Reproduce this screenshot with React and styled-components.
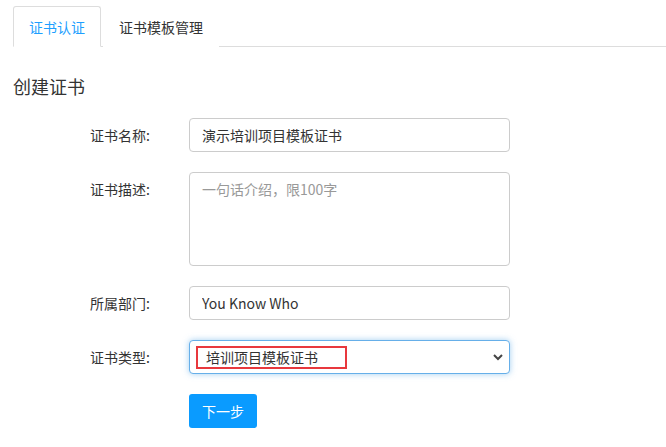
import React from 'react';
import styled, { createGlobalStyle } from 'styled-components';

const GlobalStyle = createGlobalStyle`
body {
  margin: 0;
  background: #fff;
  font-family: "Noto Sans CJK SC", "Liberation Sans", sans-serif;
  color: #333;
}
`;

const Page = styled.div`
  width: 666px;
  height: 447px;
  overflow: hidden;
  padding-top: 5px;
  box-sizing: border-box;
`;

const TabBar = styled.div`
  display: flex;
  align-items: flex-end;
  margin-left: 13px;
  height: 41px;
  border-bottom: 1px solid #ddd;
`;

const Tab = styled.div`
  height: 41px;
  box-sizing: border-box;
  padding: 0 15px;
  margin-right: 2px;
  margin-bottom: -1px;
  display: flex;
  align-items: center;
  font-size: 14px;
  cursor: pointer;
  border: 1px solid ${(p) => (p.active ? '#ddd' : 'transparent')};
  border-bottom-color: ${(p) => (p.active ? '#fff' : 'transparent')};
  border-radius: 3px 3px 0 0;
  background: #fff;
  color: ${(p) => (p.active ? '#1e9fff' : '#333')};
`;

const Heading = styled.h2`
  margin: 27px 0 0 13px;
  font-size: 18px;
  line-height: 24px;
  font-weight: normal;
  color: #333;
`;

const Form = styled.form`
  display: grid;
  grid-template-columns: 150px 321px;
  column-gap: 39px;
  row-gap: 20px;
  margin-top: 20px;
`;

const Label = styled.label`
  text-align: right;
  font-size: 14px;
  line-height: 34px;
  align-self: start;
  color: #333;
`;

const fieldBase = `
  box-sizing: border-box;
  width: 321px;
  border: 1px solid #ccc;
  border-radius: 4px;
  font-family: "Noto Sans CJK SC", "Liberation Sans", sans-serif;
  font-size: 14px;
  color: #333;
  background: #fff;
  outline: none;
`;

const Input = styled.input`
  ${fieldBase}
  height: 34px;
  padding: 0 12px;
`;

const TextArea = styled.textarea`
  ${fieldBase}
  height: 94px;
  padding: 6px 12px;
  line-height: 20px;
  resize: none;
  &::placeholder {
    color: #999;
  }
`;

const SelectWrap = styled.div`
  position: relative;
  width: 321px;
  height: 34px;
`;

const Select = styled.select`
  ${fieldBase}
  height: 34px;
  padding: 0 30px 0 16px;
  appearance: none;
  border-color: #66afe9;
  box-shadow: 0 0 6px rgba(102, 175, 233, 0.6);
`;

const Chevron = styled.svg`
  position: absolute;
  right: 6px;
  top: 12px;
  pointer-events: none;
`;

const Marker = styled.div`
  position: absolute;
  left: 7px;
  top: 6px;
  width: 151px;
  height: 23px;
  box-sizing: border-box;
  border: 2px solid #e8383d;
  pointer-events: none;
`;

const Button = styled.button`
  width: 68px;
  height: 34px;
  border: none;
  border-radius: 3px;
  background: #0a9bff;
  color: #fff;
  font-family: "Noto Sans CJK SC", sans-serif;
  font-size: 14px;
  cursor: pointer;
`;

export default function App() {
  return (
    <Page>
      <GlobalStyle />
      <TabBar>
        <Tab active>证书认证</Tab>
        <Tab>证书模板管理</Tab>
      </TabBar>
      <Heading>创建证书</Heading>
      <Form onSubmit={(e) => e.preventDefault()}>
        <Label>证书名称:</Label>
        <Input defaultValue="演示培训项目模板证书" />
        <Label>证书描述:</Label>
        <TextArea placeholder="一句话介绍，限100字" />
        <Label>所属部门:</Label>
        <Input defaultValue="You Know Who" />
        <Label>证书类型:</Label>
        <SelectWrap>
          <Select defaultValue="tpl">
            <option value="tpl">培训项目模板证书</option>
          </Select>
          <Chevron width="12" height="10" viewBox="0 0 12 10">
            <path d="M2 3 L6 7 L10 3" fill="none" stroke="#444" strokeWidth="2" />
          </Chevron>
          <Marker />
        </SelectWrap>
        <span />
        <div>
          <Button type="submit">下一步</Button>
        </div>
      </Form>
    </Page>
  );
}
